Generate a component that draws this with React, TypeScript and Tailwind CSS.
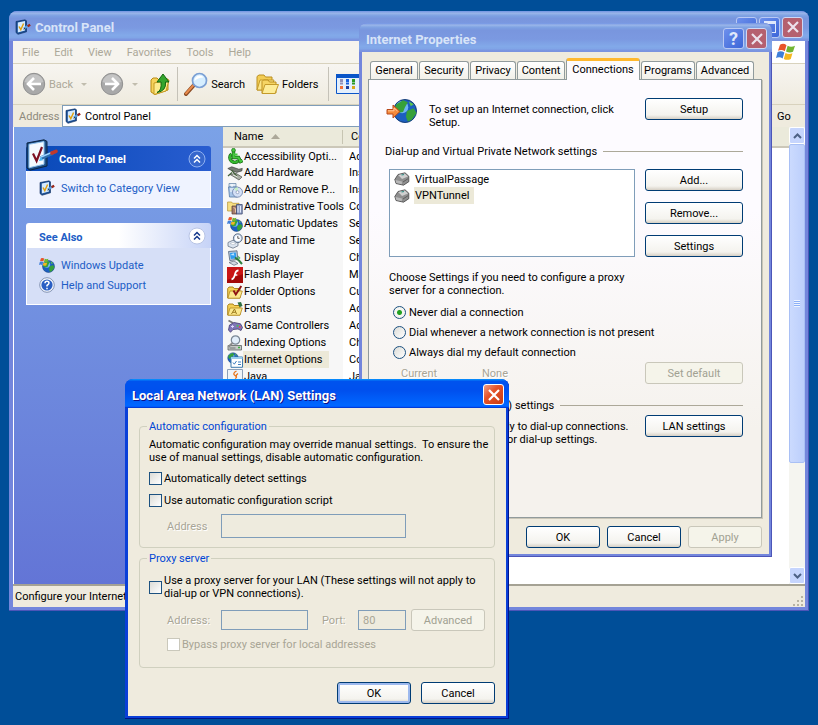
import type { ReactNode } from "react";
import clsx from "clsx";

// --- Small 16px icons ---

const Svg = ({ size = "size-4", children }: { size?: string; children: ReactNode }) => (
  <svg viewBox="0 0 16 16" className={clsx(size, "shrink-0")} aria-hidden="true">
    {children}
  </svg>
);

const PanelIcon = () => (
  <Svg>
    <path d="M1 2.5 10 .8l1.5 1v11L3 15.3 1 13.6z" fill="#1b4f93" stroke="#0a2a5c" strokeWidth=".6" />
    <path d="M2.8 3.4 10 2v9.6l-7.2 2z" fill="#d4eaff" />
    <path d="m4 7.5 1.8 3.2L8.6 4.5" fill="none" stroke="#e0a010" strokeWidth="1.5" />
    <path d="m9 9.5 5-3.3" stroke="#5aa0e0" strokeWidth="2.2" />
    <path d="m12.6 7.2 2.6-1.5" stroke="#a02818" strokeWidth="2.2" />
    <path d="m8 10.5 1.6-1.8.9 1.2z" fill="#333" />
  </Svg>
);

const BigPanelIcon = () => (
  <svg viewBox="0 0 32 32" className="size-8 shrink-0" aria-hidden="true">
    <path d="m1 4 17-3.2 3 1.6V27L4 31.2 1 29z" fill="#1e4f86" stroke="#0b2442" />
    <path d="m3 5.3 15-2.7v22.6L3 28.8z" fill="#f4faff" stroke="#8fc2ee" />
    <path d="m7 14.5 3.6 7.5L16 8" fill="none" stroke="#7d1023" strokeWidth="2.2" />
    <path d="m15 19 12-5" stroke="#2e6fae" strokeWidth="4" />
    <path d="m15 18 11-4.6" stroke="#9fd4ff" strokeWidth="1.5" />
    <path d="m26 14 4-1.6" stroke="#c0392b" strokeWidth="3.6" strokeLinecap="round" />
    <path d="m13 22 1.8-4.6 2.2 3.8z" fill="#49b6f4" />
  </svg>
);

const Globe = ({ x = 8, y = 8, r = 6 }: { x?: number; y?: number; r?: number }) => (
  <g transform={`translate(${x} ${y}) scale(${r / 6})`}>
    <circle r="6" fill="#1c5fc0" stroke="#123a74" strokeWidth=".5" />
    <circle cx="-1.5" cy="-2" r="3.2" fill="#6db4f4" />
    <path d="M-4.5-3.5-1-5.6l2.5 1L0-2l-1 2.5-3 .5-1.6-2zM1 0l3.5-1.5L6 1 3.5 4.5 1.5 5.5.5 3z" fill="#37a13a" />
    <path d="m2-5 2.6 1.5L3-2.5z" fill="#5cc44c" />
  </g>
);

const Flag = ({ small }: { small?: boolean }) => (
  <g transform={small ? "scale(.62)" : undefined}>
    <path d="M3.2 2.2Q6 .6 8.4 2.6L7 7.4Q4.6 5.6 1.6 7z" fill="#e8542a" />
    <path d="M9.3 3Q12 4.5 15.2 3L13.6 7.8Q11 9.2 8 7.6z" fill="#72b532" />
    <path d="M1.3 8Q4 6.7 6.7 8.4L5.3 13.2Q3 11.5 0 12.8z" fill="#3f7fd9" />
    <path d="M7.6 8.7Q10.3 10.3 13.2 8.9L11.8 13.6Q9 15 6.2 13.5z" fill="#f4b821" />
  </g>
);

const UpdateIcon = () => (
  <Svg>
    <Globe x={9.5} y={9.5} r={6} />
    <Flag small />
  </Svg>
);

const HelpIcon = () => (
  <Svg>
    <circle cx="8" cy="8" r="7.3" fill="#f4f7fc" stroke="#8494b4" />
    <circle cx="8" cy="8" r="5.6" fill="#2a5fc4" />
    <path d="M6 6.3q0-2 2-2t2 1.8q0 1.2-2 2.4v1M8 10.8v1.4" fill="none" stroke="#fff" strokeWidth="1.5" />
  </Svg>
);

const ModemIcon = () => (
  <Svg>
    <path d="M.8 8.5 4 3.500 11 1.800l3.800 3.400v5.500L9.500 14.200 2 12.500z" fill="#8e8e8e" stroke="#444" strokeWidth=".8" />
    <path d="m4.200 4 6.600-1.600L14 5.500 8 8z" fill="#cfcfcf" />
    <path d="M1.500 9 8 10.500l-.2 2.700-5.500-1.300z" fill="#b8b8b8" />
    <path d="m7.500 4 2.500-.5" stroke="#2d8f87" strokeWidth="1.200" />
    <path d="m9 11 5-3.300" stroke="#5d5d5d" />
  </Svg>
);

const FolderShape = () => (
  <>
    <path d="M.7 4.500 2 3h4l1.200 1.500H13V14H.7z" fill="#f3cf55" stroke="#a57a13" strokeWidth=".9" />
    <path d="M3 7h12.300L13 14.200H.9z" fill="#fbe88d" stroke="#b48a20" strokeWidth=".8" />
  </>
);

const icons: Record<string, ReactNode> = {
  access: (
    <Svg>
      <path d="M4.500 6A4.800 4.800 0 1 0 11.500 12.500" fill="none" stroke="#11610f" strokeWidth="3.4" />
      <path d="M4.500 6A4.800 4.800 0 1 0 11.500 12.500" fill="none" stroke="#35b82f" strokeWidth="2.2" />
      <path d="M6.500 3v6.500h5l2 4 2-1" fill="none" stroke="#11610f" strokeWidth="3.4" />
      <path d="M6.500 3v6.500h5l2 4 1.700-.9M7 6.500h3.500" fill="none" stroke="#45c83e" strokeWidth="2.2" />
      <circle cx="6.5" cy="2.2" r="1.9" fill="#45c83e" stroke="#11610f" strokeWidth=".6" />
    </Svg>
  ),
  hardware: (
    <Svg>
      <path d="m.8 3.500 4-1.700 7 2.400 3.500-.8-.5 2.500-5 1.500-5.500-2z" fill="#777c74" stroke="#333" strokeWidth=".6" />
      <path d="m3 9.500 6-1.200 6 3.700-3 3-6-3.800z" fill="#a9ada4" stroke="#3a3d38" strokeWidth=".6" />
      <path d="m4.500 5 6 7M1 11l4-3.500" stroke="#45613d" strokeWidth="1.3" />
      <path d="m6 9.800 5 2.400" stroke="#e5e8e0" />
    </Svg>
  ),
  programs: (
    <Svg>
      <path d="M2 1.500h7V5H2z" fill="#dfeaf5" stroke="#5d7fa5" strokeWidth=".7" />
      <path d="M1.500 5h9v10h-8z" fill="#a9c6e8" stroke="#5478a6" strokeWidth=".8" />
      <path d="M3 7h5M3 9h4M5 2v3" stroke="#fff" />
      <circle cx="10.5" cy="10.2" r="5" fill="#d4e0f6" stroke="#667ba6" strokeWidth=".8" />
      <path d="M10.500 10.200 7 6.800A5 5 0 0 1 11 5.300z" fill="#c6f0c4" />
      <circle cx="10.5" cy="10.2" r="1.5" fill="#fff" stroke="#7a88b0" strokeWidth=".7" />
    </Svg>
  ),
  admin: (
    <Svg>
      <path d="M.6 3h4l1 1.300H12V12H.6z" fill="#f7df83" stroke="#b3902e" strokeWidth=".7" />
      <path d="M5 7h5v8H5z" fill="#a57c6c" stroke="#553b30" strokeWidth=".7" />
      <path d="M9.500 5.500h5.700V15H9.500z" fill="#93a2c4" stroke="#3d4a73" strokeWidth=".8" />
      <path d="M11 7v6.500M13.500 7v6.500" stroke="#e3eafc" />
      <path d="m6.500 8.500 2 1v4" stroke="#e9c6a0" fill="none" />
    </Svg>
  ),
  update: <UpdateIcon />,
  date: (
    <Svg>
      <path d="m1 9.500 5-2.300 5 2.300v3.300l-5 2.400-5-2z" fill="#dbe4ef" stroke="#6a7688" strokeWidth=".8" />
      <path d="m3 10.500 3-1.200 3 1.200-3 1.300z" fill="#fff" stroke="#a0aab8" strokeWidth=".5" />
      <circle cx="10.8" cy="5.2" r="4.4" fill="#c8d8ea" stroke="#56667d" strokeWidth=".9" />
      <circle cx="10.8" cy="5.2" r="2.9" fill="#fff" />
      <path d="M10.800 3v2.300h1.800" fill="none" stroke="#333" strokeWidth=".8" />
    </Svg>
  ),
  display: (
    <Svg>
      <path d="m1.500 1.500 8.500-.7.8 8.700-8 1z" fill="#b6c9df" stroke="#51637b" strokeWidth=".8" />
      <path d="m3 2.900 5.800-.5.5 5.800-5.500.7z" fill="#2e9cf0" />
      <path d="m3.500 5 3-2 1 2.500z" fill="#bfe6ff" />
      <path d="M2 12.500 7 11l4 2.500-4 1.800z" fill="#d2d8e0" stroke="#5c6675" strokeWidth=".7" />
      <path d="m8 7.500 4 3 3 3.500" stroke="#2e7f3c" strokeWidth="2" fill="none" />
      <path d="m11 5.500 2.500 2.500-2 1.500z" fill="#49a852" />
    </Svg>
  ),
  flash: (
    <Svg>
      <path d="M0 0h16v16H0z" fill="#a30808" />
      <path d="M0 0h16v7L0 13z" fill="#c91515" />
      <path d="M11.500 3.300q-2.500 0-3.400 3.400Q7 11.800 4.500 12.300M7.300 8h3" fill="none" stroke="#fff" strokeWidth="1.7" />
    </Svg>
  ),
  folder: (
    <Svg>
      <FolderShape />
      <path d="m6.500 6.500 2.300 4L14.300 2" fill="none" stroke="#8e1212" strokeWidth="1.9" />
    </Svg>
  ),
  fonts: (
    <Svg>
      <FolderShape />
      <path d="m10.500 1.500 3.500-.5 1.500 4-3 1z" fill="#2f7044" />
      <path d="m4.500 13 3-5 2 5M5.600 11.300h3" stroke="#9c7a1d" fill="none" />
    </Svg>
  ),
  games: (
    <Svg>
      <path d="M1.500 2.500 6 5" stroke="#777" strokeWidth="1.8" />
      <path d="M2.500 7 7 4.500l6.500 1.300 2 3.700-1.500 3-3-1.500-5 .5-2.500 2.800L1.500 12z" fill="#8177b8" stroke="#433c70" strokeWidth=".8" />
      <path d="M4 8.500h3M5.500 7.200v2.700" stroke="#ddd8ff" />
      <circle cx="10.5" cy="7.8" r="1" fill="#4cc04c" />
      <circle cx="12.8" cy="9" r="1" fill="#e25050" />
    </Svg>
  ),
  indexing: (
    <Svg>
      <path d="M1 10.500h13.500V15H1z" fill="#c5c9c7" stroke="#5d615f" strokeWidth=".8" />
      <path d="M2.500 13h6" stroke="#6f7472" />
      <path d="M11 12.500h2" stroke="#3bb43b" strokeWidth="1.5" />
      <circle cx="8.5" cy="5" r="4.2" fill="#e2eefa" stroke="#7a8896" strokeWidth="1.2" />
      <path d="m5.500 8-4 3.800" stroke="#8c8c8c" strokeWidth="2" />
    </Svg>
  ),
  internet: (
    <Svg>
      <Globe x={6} y={6} r={5.3} />
      <path d="M4 5h11.500v10.300H4z" fill="#fff" stroke="#3d79ac" />
      <path d="M4 5h11.500v2H4z" fill="#9bcdec" />
      <path d="m6 10.500 1.300 1.700L9.500 9M11 10h3M11 12.500h3" fill="none" stroke="#3b7ec0" />
    </Svg>
  ),
  java: (
    <Svg>
      <path d="M.5.5h15v15H.5z" fill="#eef3f8" stroke="#8ca0b8" />
      <path d="M9.500 2Q5 4.500 8 6.500t0 3M11 4.500Q8.500 6 9.500 8" fill="none" stroke="#e8761c" strokeWidth="1.3" />
      <path d="M4 10.500q4 1.700 8 0M5 12.500q3 1.200 6 0" fill="none" stroke="#4c6f98" strokeWidth="1.2" />
    </Svg>
  ),
};

// --- Toolbar icons ---

const ArrowDisc = ({ flip }: { flip?: boolean }) => (
  <svg viewBox="0 0 24 24" className={clsx("size-6 shrink-0", flip && "-scale-x-100")} aria-hidden="true">
    <circle cx="12" cy="12" r="10.7" fill="#a9a9a9" stroke="#8f8f8f" />
    <path d="M2.500 10a9.700 9.700 0 0 1 19 0Q12 14 2.500 10z" fill="#c4c4c4" />
    <path d="M19 12H7M12 6l-6 6 6 6" fill="none" stroke="#fff" strokeWidth="2.6" />
  </svg>
);

const UpFolderIcon = () => (
  <svg viewBox="0 0 20 24" className="h-6 w-5 shrink-0" aria-hidden="true">
    <path d="m1 8 2-2h4l2 2 9-1v11L5 22.500 1 20z" fill="#f6d25b" stroke="#b98a14" />
    <path d="m4 11 15-3-3 11-12 3.500z" fill="#fdeb8e" stroke="#c59a22" />
    <path d="M7 20.500q5-2 4-10.500H7l6-8 6 8h-3.500q1 9-8.500 10.500z" fill="#35a52d" stroke="#12660f" />
  </svg>
);

const SearchIcon = () => (
  <svg viewBox="0 0 24 24" className="size-6 shrink-0" aria-hidden="true">
    <path d="m2 22 8-9" stroke="#8a4a22" strokeWidth="4" strokeLinecap="round" />
    <path d="m2 21.500 8-9" stroke="#e88a4c" strokeWidth="2" strokeLinecap="round" />
    <circle cx="15.5" cy="8.5" r="7" fill="#d6eeff" stroke="#7a9fd4" strokeWidth="1.7" />
    <path d="M10.500 9a5 5 0 0 1 5-5.500q3 0 4 2-6 0-9 3.500z" fill="#fff" />
  </svg>
);

const FoldersIcon = () => (
  <svg viewBox="0 0 24 24" className="size-6 shrink-0" aria-hidden="true">
    <path d="M2 4.500 4 3h5l1.500 2H17v13H2z" fill="#f3cd55" stroke="#bb8f20" />
    <path d="m2 18 3-10h14l-3 10z" fill="#fbe68a" stroke="#c49a2a" />
    <path d="M7 9.500 8.500 8H13l1.500 2H21v11H7z" fill="#f6d564" stroke="#bb8f20" />
    <path d="m7 21.500 3-9h13.500L20 21.500z" fill="#fdec98" stroke="#c49a2a" />
  </svg>
);

const ViewsIcon = () => (
  <svg viewBox="0 0 24 20" className="h-5 w-6 shrink-0" aria-hidden="true">
    <path d="M.5.5h23v19H.5z" fill="#e4effc" stroke="#0a55c8" />
    <path d="M0 0h24v4H0z" fill="#0a55c8" />
    <path d="M4 5h3v3H4zM4 8.500h3v2H4z" fill="#9090b8" />
    <path d="M10 5h3v3h-3zM10 8.500h3v2h-3z" fill="#1660e0" />
    <path d="M16 5h3v3h-3zM16 8.500h3v2h-3z" fill="#2a9a22" />
    <path d="M4 12h3v3H4z" fill="#f0703a" />
    <path d="M10 12h3v3h-3z" fill="#1c3f9c" />
    <path d="M16 12h3v3h-3z" fill="#d8a818" />
  </svg>
);

const ConnectIcon = () => (
  <svg viewBox="0 0 32 28" className="h-7 w-8 shrink-0" aria-hidden="true">
    <Globe x={20} y={13} r={11.5} />
    <path d="M2 11.500h6V7l7 6.500L8 20v-4H2z" fill="#f58a3c" stroke="#b8481a" />
    <path d="M3 12.800h6V10l3.500 3" fill="none" stroke="#ffc89a" />
  </svg>
);

// --- Window parts ---

const CloseButton = ({ active }: { active?: boolean }) => (
  <button
    aria-label="Close"
    className={clsx(
      "grid size-[21px] shrink-0 place-items-center rounded-[3px] border",
      active ? "border-white bg-[linear-gradient(135deg,#f0a088,#e5532a_40%,#c93a10)]" : "border-[#cdd8f6] bg-[#b5606f]",
    )}
  >
    <svg viewBox="0 0 12 12" className={clsx("size-3", active ? "text-white" : "text-[#ece2ec]")} aria-hidden="true">
      <path d="m1 1 10 10M11 1 1 11" stroke="currentColor" strokeWidth="2.2" />
    </svg>
  </button>
);

const captionClass =
  "grid size-[21px] shrink-0 place-items-center rounded-[3px] border border-[#b9c9f4] bg-[linear-gradient(135deg,#6d90ec,#3c66d8)]";

const dimBar =
  "bg-[linear-gradient(180deg,#7697e7,#7e9ee3_3%,#94afe8_6%,#97b4e9_8%,#82a5e4_14%,#7c9fe2_17%,#7996de_25%,#7b99e1_56%,#82a9e9_81%,#80a5e7_89%,#7b96e1_94%,#7a93df_97%)]";
const activeBar =
  "bg-[linear-gradient(180deg,#0997ff,#0053ee_8%,#0050ee_40%,#0066ff_88%,#0066ff_93%,#005bff_95%,#003dd7_96%)]";
const titleFont = "font-['Roboto',sans-serif] text-[13px] leading-4 font-bold";

const WinButton = ({ children, wide, primary, disabled }: { children: ReactNode; wide?: boolean; primary?: boolean; disabled?: boolean }) => (
  <button
    disabled={disabled}
    className={clsx(
      "h-[22px] shrink-0 rounded-[3px] border text-center",
      wide ? "w-[98px]" : "w-[74px]",
      disabled
        ? "border-[#c9c7ba] bg-[#f5f4ea] text-[#a1a192]"
        : "border-[#003c74] bg-[linear-gradient(180deg,#fff,#f4f3ee_80%,#d6d0c5)]",
      primary && "shadow-[inset_0_0_0_2px_#9db9ee]",
    )}
  >
    {children}
  </button>
);

const boxClass = "size-[13px] shrink-0 appearance-none border border-[#1c5180] bg-[linear-gradient(135deg,#dcdcd7,#fff)] disabled:border-[#cac8bb] disabled:bg-white disabled:bg-none";
const fieldClass = "border border-[#7f9db9] bg-[#eeebde]";
const dimText = "text-[#a8a595] [text-shadow:1px_1px_0_#fff]";

const SectionTitle = ({ children }: { children: ReactNode }) => (
  <div className="flex items-center gap-[6px]">
    <h3 className="whitespace-nowrap">{children}</h3>
    <span className="h-px flex-1 bg-[#aca899]" />
  </div>
);

const Chevron = ({ light }: { light?: boolean }) => (
  <svg viewBox="0 0 18 18" className="size-[18px] shrink-0" aria-hidden="true">
    <circle cx="9" cy="9" r="8" fill={light ? "#fff" : "#3767cc"} stroke={light ? "#b8c4e4" : "#8fb0f0"} />
    <path d="m6 8.500 3-3 3 3M6 12.500l3-3 3 3" fill="none" stroke={light ? "#14388c" : "#fff"} strokeWidth="1.5" />
  </svg>
);

const rows = [
  ["access", "Accessibility Opti...", "Adjust"],
  ["hardware", "Add Hardware", "Installs"],
  ["programs", "Add or Remove P...", "Install"],
  ["admin", "Administrative Tools", "Configure"],
  ["update", "Automatic Updates", "Set up"],
  ["date", "Date and Time", "Set the"],
  ["display", "Display", "Change"],
  ["flash", "Flash Player", "Manage"],
  ["folder", "Folder Options", "Customize"],
  ["fonts", "Fonts", "Add"],
  ["games", "Game Controllers", "Add"],
  ["indexing", "Indexing Options", "Change"],
  ["internet", "Internet Options", "Configure"],
  ["java", "Java", "Java"],
];

const menus = ["File", "Edit", "View", "Favorites", "Tools", "Help"];
const tabs = [
  { name: "General", width: "w-[48px]" },
  { name: "Security", width: "w-[50px]" },
  { name: "Privacy", width: "w-[46px]" },
  { name: "Content", width: "w-[48px]" },
  { name: "Connections", width: "w-[74px]" },
  { name: "Programs", width: "w-[54px]" },
  { name: "Advanced", width: "w-[58px]" },
];
const dialModes = ["Never dial a connection", "Dial whenever a network connection is not present", "Always dial my default connection"];

function SidePane() {
  return (
    <aside className="w-[209px] shrink-0 bg-[linear-gradient(180deg,#7ba2e7,#6375d6)] px-3 pt-[19px] text-[#215dc6]">
      <section>
        <div className="flex h-[25px] items-center rounded-t-[3px] bg-[linear-gradient(90deg,#0849b8,#295dd0)] pr-[5px] text-white">
          <div className="-mt-2">
            <BigPanelIcon />
          </div>
          <h2 className="flex-1 pt-[2px] pl-px font-bold">Control Panel</h2>
          <button aria-label="Collapse Control Panel">
            <Chevron />
          </button>
        </div>
        <div className="border border-t-0 border-white bg-[#eff3ff] px-3 pt-[9px] pb-[11px]">
          <a href="#category" className="flex items-center gap-[6px]">
            <PanelIcon />
            Switch to Category View
          </a>
        </div>
      </section>
      <section className="mt-[15px]">
        <div className="flex h-[25px] items-center rounded-t-[3px] bg-[linear-gradient(90deg,#fff_50%,#c6d3f7)] pr-[5px] pl-[13px]">
          <h2 className="flex-1 pt-1 font-bold">See Also</h2>
          <button aria-label="Collapse See Also">
            <Chevron light />
          </button>
        </div>
        <div className="flex flex-col gap-1 border border-t-0 border-white bg-[#d6dff7] px-3 pt-[9px] pb-[11px]">
          <a href="#update" className="flex items-center gap-[6px]">
            <UpdateIcon />
            Windows Update
          </a>
          <a href="#help" className="flex items-center gap-[6px]">
            <HelpIcon />
            Help and Support
          </a>
        </div>
      </section>
    </aside>
  );
}

function ItemList() {
  return (
    <div className="min-w-0 flex-1 bg-white">
      <table className="w-full table-fixed border-collapse text-left whitespace-nowrap">
        <thead>
          <tr className="h-5 border-b-2 border-[#cbc7b8] bg-[#ebeadb]">
            <th className="w-[120px] p-0 pl-[11px] font-normal">
              <span className="flex items-center gap-2">
                Name
                <svg viewBox="0 0 9 5" className="h-[5px] w-[9px]" aria-hidden="true">
                  <path d="M0 5 4.500 0 9 5z" fill="#aca899" />
                </svg>
                <span className="ml-auto h-[14px] w-px bg-[#c7c5b2]" />
              </span>
            </th>
            <th className="p-0 pl-2 font-normal">Comments</th>
          </tr>
        </thead>
        <tbody>
          {rows.map(([icon, name, note]) => (
            <tr key={name} className="h-[17px]">
              <td className="bg-[#f7f7f7] p-0 pl-1">
                <span className="flex items-center">
                  {icons[icon]}
                  <span className={clsx("px-px", name === "Internet Options" && "bg-[#ece9d8] py-[2px] pr-[6px]")}>{name}</span>
                </span>
              </td>
              <td className="p-0 pl-[6px]">{note}</td>
            </tr>
          ))}
        </tbody>
      </table>
    </div>
  );
}

const scrollButton = "grid h-[17px] w-full shrink-0 place-items-center rounded-[2px] border border-white bg-[#c6d5fd]";

function ScrollBar() {
  return (
    <div className="flex w-4 shrink-0 flex-col bg-[#f5f5f0]">
      <button aria-label="Scroll up" className={scrollButton}>
        <svg viewBox="0 0 9 6" className="h-[6px] w-[9px]" aria-hidden="true">
          <path d="m1 5 3.500-3.500L8 5" fill="none" stroke="#4d6185" strokeWidth="2" />
        </svg>
      </button>
      <div className="grid flex-[319] place-items-center rounded-[2px] border border-[#a9c0f5] bg-[linear-gradient(90deg,#cbdafe,#bccffc)]">
        <span className="h-[7px] w-[6px] bg-[repeating-linear-gradient(180deg,#eef4fe_0_1px,#8cb0f8_1px_2px)]" />
      </div>
      <div className="flex-[104]" />
      <button aria-label="Scroll down" className={scrollButton}>
        <svg viewBox="0 0 9 6" className="h-[6px] w-[9px]" aria-hidden="true">
          <path d="m1 1 3.500 3.500L8 1" fill="none" stroke="#4d6185" strokeWidth="2" />
        </svg>
      </button>
    </div>
  );
}

function ControlPanelWindow() {
  return (
    <section className="flex flex-1 flex-col overflow-hidden rounded-t-lg bg-[#7386dc] shadow-[inset_-1px_-1px_0_#4c55b8]">
      <header className={clsx("flex h-[30px] shrink-0 items-center gap-[2px] px-[6px] pt-[2px]", dimBar)}>
        <PanelIcon />
        <h1 className={clsx("flex-1 pt-px pl-[2px] text-[#d8e4f8]", titleFont)}>Control Panel</h1>
        <button aria-label="Minimize" className={captionClass}>
          <span className="mt-2 h-[3px] w-2 bg-[#dfe8fb]" />
        </button>
        <button aria-label="Maximize" className={captionClass}>
          <span className="size-3 border border-t-[3px] border-[#dfe8fb]" />
        </button>
        <CloseButton />
      </header>
      <div className="mx-1 mb-1 flex flex-1 flex-col bg-[#efebde]">
        <nav className="flex h-[23px] items-stretch border-b border-[#d8d2bd] bg-[#f6f4ee] text-[#aca899]">
          <div className="flex flex-1 items-center gap-[15px] pl-[9px]">
            {menus.map((menu) => (
              <button key={menu}>{menu}</button>
            ))}
          </div>
          <div className="grid w-[38px] place-items-center bg-white">
            <Svg size="size-5">
              <Flag />
            </Svg>
          </div>
        </nav>
        <div className="flex h-[41px] items-center border-b border-[#d8d2bd] bg-[linear-gradient(180deg,#f7f5f1,#efebde)] pl-[9px]">
          <button className="flex items-center gap-[3px] text-[#aca899]">
            <ArrowDisc />
            Back
          </button>
          <span className="ml-2 border-x-[3px] border-t-[3px] border-x-transparent border-t-[#c1bdae]" />
          <button aria-label="Forward" className="ml-[13px]">
            <ArrowDisc flip />
          </button>
          <span className="ml-2 border-x-[3px] border-t-[3px] border-x-transparent border-t-[#c1bdae]" />
          <button aria-label="Up" className="ml-3">
            <UpFolderIcon />
          </button>
          <span className="ml-[7px] h-[34px] w-px bg-[#c5c2b8]" />
          <button className="ml-[6px] flex items-center gap-[3px]">
            <SearchIcon />
            Search
          </button>
          <button className="ml-[10px] flex items-center gap-[3px]">
            <FoldersIcon />
            Folders
          </button>
          <span className="ml-[10px] h-[34px] w-px bg-[#c5c2b8]" />
          <button aria-label="Views" className="ml-[7px]">
            <ViewsIcon />
          </button>
        </div>
        <div className="flex h-[22px] items-center pl-[6px]">
          <label htmlFor="location" className="w-[43px] text-[#8d8a7c]">
            Address
          </label>
          <div className="flex h-full flex-1 items-center gap-1 border border-[#7f9db9] bg-white pl-[2px]">
            <PanelIcon />
            <input id="location" defaultValue="Control Panel" className="min-w-0 flex-1 outline-none" />
          </div>
          <button className="w-[34px] pl-[6px] text-left">Go</button>
        </div>
        <div className="flex flex-1 items-stretch border-l border-white bg-white">
          <SidePane />
          <ItemList />
          <ScrollBar />
        </div>
        <footer className="flex h-[23px] items-center justify-between border-t-2 border-[#a5a294] bg-[#efebde] pl-[2px]">
          <p>Configure your Internet settings</p>
          <svg viewBox="0 0 12 12" className="mt-2 mr-px size-3" aria-hidden="true">
            <path d="M9 1h2v2H9zM9 5h2v2H9zM5 5h2v2H5zM9 9h2v2H9zM5 9h2v2H5zM1 9h2v2H1z" fill="#b8b4a3" />
          </svg>
        </footer>
      </div>
    </section>
  );
}

function InternetProperties() {
  return (
    <section className="absolute top-[23px] left-[359px] w-[413px] rounded-t-lg bg-[#7386dc] pb-[3px] shadow-[inset_-1px_-1px_0_#4c55b8]">
      <header className={clsx("flex h-[29px] items-center gap-[2px] rounded-t-lg pt-[2px] pr-[5px] pl-[7px]", dimBar)}>
        <h2 className={clsx("flex-1 pt-[2px] text-[#d8e4f8]", titleFont)}>Internet Properties</h2>
        <button aria-label="Help" className={clsx(captionClass, "text-[18px] leading-4 font-bold text-[#dfe8fb]")}>
          ?
        </button>
        <CloseButton />
      </header>
      <div className="mx-[3px] bg-[#efebde] pt-[6px] pr-[7px] pb-[6px] pl-[6px]">
        <div role="tablist" className="flex items-end gap-px pl-[2px]">
          {tabs.map(({ name, width }) => {
            const active = name === "Connections";
            return (
              <button
                key={name}
                role="tab"
                aria-selected={active}
                className={clsx(
                  width,
                  "rounded-t-[3px] border border-b-0 border-[#919b9c] text-center",
                  active
                    ? "z-10 -mb-px h-[22px] border-t-[3px] border-t-[#ffb82e] bg-[#fdfbfd] pb-[2px]"
                    : "h-[18px] bg-[linear-gradient(180deg,#fff,#f2f0e8)]",
                )}
              >
                {name}
              </button>
            );
          })}
        </div>
        <div role="tabpanel" className="border border-[#919b9c] bg-[linear-gradient(180deg,#fdfbff_30%,#f5f2ed_80%)] pt-[18px] pr-[18px] pb-[71px] pl-4 shadow-[1px_1px_0_#c9c6b8]">
          <div className="flex">
            <ConnectIcon />
            <p className="flex-1 pt-[5px] pr-6 pl-3">To set up an Internet connection, click Setup.</p>
            <WinButton wide>Setup</WinButton>
          </div>
          <div className="mt-4">
            <SectionTitle>Dial-up and Virtual Private Network settings</SectionTitle>
          </div>
          <div className="mt-[11px] flex justify-between pl-1">
            <ul className="w-[246px] border border-[#7f9db9] bg-white pt-px pl-1">
              <li className="flex items-center gap-1">
                <ModemIcon />
                <span className="p-px">VirtualPassage</span>
              </li>
              <li className="flex items-center gap-1">
                <ModemIcon />
                <span className="bg-[#ece9d8] py-[2px] pr-[5px] pl-px">VPNTunnel</span>
              </li>
            </ul>
            <div className="flex flex-col gap-[11px]">
              <WinButton wide>Add...</WinButton>
              <WinButton wide>Remove...</WinButton>
              <WinButton wide>Settings</WinButton>
            </div>
          </div>
          <p className="mt-[14px] w-[260px] pl-1">Choose Settings if you need to configure a proxy server for a connection.</p>
          <div className="mt-[5px] pl-2">
            {dialModes.map((mode, i) => (
              <label key={mode} className="flex h-5 items-center gap-[3px]">
                <input
                  type="radio"
                  name="dial"
                  defaultChecked={i === 0}
                  className="size-[13px] shrink-0 appearance-none rounded-full border border-[#1c5180] bg-[linear-gradient(135deg,#dcdcd7,#fff)] checked:bg-[radial-gradient(circle,#21a121_0_2px,#f5f5f1_3px)]"
                />
                {mode}
              </label>
            ))}
          </div>
          <div className="flex items-center justify-between pl-4">
            <p className={dimText}>
              <span className="inline-block w-[81px]">Current</span>None
            </p>
            <WinButton wide disabled>
              Set default
            </WinButton>
          </div>
          <div className="mt-[15px]">
            <SectionTitle>Local Area Network (LAN) settings</SectionTitle>
          </div>
          <div className="mt-[3px] flex justify-between pl-[3px]">
            <p className="pt-[5px] whitespace-nowrap">
              LAN Settings do not apply to dial-up connections.
              <br />
              Choose Settings above for dial-up settings.
            </p>
            <WinButton wide>LAN settings</WinButton>
          </div>
        </div>
        <div className="mt-2 flex justify-end gap-[7px]">
          <WinButton>OK</WinButton>
          <WinButton>Cancel</WinButton>
          <WinButton disabled>Apply</WinButton>
        </div>
      </div>
    </section>
  );
}

const groupClass = "min-w-0 rounded-[4px] border border-[#d0d0bf]";

function LanSettings() {
  return (
    <section className="absolute top-[379px] left-[125px] z-20 w-[384px] rounded-t-lg bg-[#0a3fd8] pb-[3px] shadow-[inset_-1px_-1px_0_#00138c]">
      <header className={clsx("flex h-[29px] items-center rounded-t-lg pt-[2px] pr-[5px] pl-[7px]", activeBar)}>
        <h2 className={clsx("flex-1 pt-[2px] text-white [text-shadow:1px_1px_0_#0f1089]", titleFont)}>Local Area Network (LAN) Settings</h2>
        <CloseButton active />
      </header>
      <div className="mx-[3px] bg-[#efebde] px-[11px] pt-3 pb-3">
        <fieldset className={clsx(groupClass, "px-[9px] pb-[9px]")}>
          <legend className="-ml-[2px] px-[2px] text-[#0046d5]">Automatic configuration</legend>
          <p className="mt-[5px] whitespace-pre">{"Automatic configuration may override manual settings.  To ensure the\nuse of manual settings, disable automatic configuration."}</p>
          <label className="mt-2 flex items-center gap-[2px]">
            <input type="checkbox" className={boxClass} />
            Automatically detect settings
          </label>
          <label className="mt-[9px] flex items-center gap-[2px]">
            <input type="checkbox" className={boxClass} />
            Use automatic configuration script
          </label>
          <div className="mt-[7px] flex items-center pl-[18px]">
            <label htmlFor="script" className={clsx("w-[54px]", dimText)}>
              Address
            </label>
            <input id="script" disabled className={clsx(fieldClass, "h-6 w-[185px]")} />
          </div>
        </fieldset>
        <fieldset className={clsx(groupClass, "mt-1 px-[9px] pb-4")}>
          <legend className="-ml-[2px] px-[2px] text-[#0046d5]">Proxy server</legend>
          <label className="mt-[9px] flex items-center gap-[2px]">
            <input type="checkbox" className={boxClass} />
            <span className="whitespace-pre">{"Use a proxy server for your LAN (These settings will not apply to\ndial-up or VPN connections)."}</span>
          </label>
          <div className="mt-[9px] flex items-center pl-[18px]">
            <label htmlFor="proxy" className={clsx("w-[54px]", dimText)}>
              Address:
            </label>
            <input id="proxy" disabled className={clsx(fieldClass, "h-5 w-[87px]")} />
            <label htmlFor="port" className={clsx("w-[50px] pl-[14px]", dimText)}>
              Port:
            </label>
            <input id="port" disabled defaultValue="80" className={clsx(fieldClass, "mr-[5px] h-5 w-[48px] pl-1 text-[#a8a595]")} />
            <WinButton disabled>Advanced</WinButton>
          </div>
          <label className="mt-[7px] flex items-center gap-[2px] pl-[18px] text-[#a8a595]">
            <input type="checkbox" disabled className={boxClass} />
            Bypass proxy server for local addresses
          </label>
        </fieldset>
        <div className="mt-[14px] flex justify-end gap-[10px]">
          <WinButton primary>OK</WinButton>
          <WinButton>Cancel</WinButton>
        </div>
      </div>
    </section>
  );
}

export default function App() {
  return (
    <main className="relative flex min-h-screen flex-col bg-[#004e98] px-[9px] pt-[11px] pb-[114px] font-['Roboto',sans-serif] text-[11px] leading-[13px] text-black">
      <ControlPanelWindow />
      <InternetProperties />
      <LanSettings />
    </main>
  );
}
